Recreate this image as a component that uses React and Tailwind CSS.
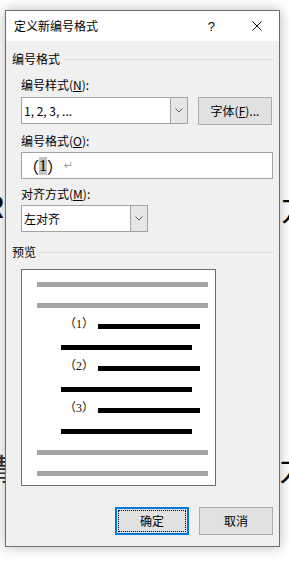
import React from 'react';

const Chevron = () => (
  <svg width="8" height="5" viewBox="0 0 8 5" fill="none">
    <path d="M0.5 0.5 L4 4 L7.5 0.5" stroke="#5f5f5f" strokeWidth="1" />
  </svg>
);

const Select = ({ width, text }) => (
  <div className={`flex h-[27px] border border-[#a3a3a3] bg-white ${width}`}>
    <div className="flex flex-1 items-center pl-[2px] text-[12px] leading-[16px] text-black">{text}</div>
    <div className="flex w-[17px] items-center justify-center border-l border-[#a3a3a3] bg-[#e6e6e6]">
      <Chevron />
    </div>
  </div>
);

const GroupHeader = ({ label, gap }) => (
  <div className="flex h-[16px] items-center">
    <span className="text-[12px] leading-[16px] text-black">{label}</span>
    <div className={`h-px flex-1 bg-[#dcdcdc] ${gap}`} />
  </div>
);

const Label = ({ text, k, className }) => (
  <div className={`h-[16px] text-[12px] leading-[16px] text-black ${className}`}>
    {text}(<span className="underline">{k}</span>):
  </div>
);

const GrayLine = () => <div className="ml-[15px] h-[5px] w-[171px] bg-[#a4a4a4]" />;
const LongLine = () => <div className="ml-[39px] h-[5px] w-[131px] bg-black" />;
const NumLine = ({ n }) => (
  <div className="flex h-[5px] items-center">
    <span className="mb-[5px] w-[76px] pl-[42px] font-['Liberation_Serif','Noto_Sans_CJK_SC',serif] text-[12px] leading-none whitespace-nowrap text-[#111]">
      （{n}）
    </span>
    <div className="h-[5px] w-[102px] bg-black" />
  </div>
);

export default function App() {
  return (
    <div className="relative h-[561px] w-[289px] overflow-hidden bg-white pl-[5px] pt-[10px] font-['Noto_Sans_CJK_SC',sans-serif]">
      {/* document text behind the dialog */}
      <span className="absolute left-[-15px] top-[190px] text-[30px] leading-none text-black">R</span>
      <span className="absolute left-[-18px] top-[452px] text-[30px] leading-none text-[#333]">请</span>
      <span className="absolute left-[281px] top-[192px] text-[30px] leading-none text-black">方</span>
      <span className="absolute left-[279px] top-[452px] text-[30px] leading-none text-black">力</span>

      <div className="relative flex h-[537px] w-[275px] flex-col border border-[#6e6e6e] bg-[#f0f0f0] shadow-[0_0_12px_rgba(0,0,0,0.28)]">
        <div className="flex h-[30px] items-center bg-white pl-[8px]">
          <span className="text-[12px] leading-[16px] text-black">定义新编号格式</span>
          <div className="flex-1" />
          <span className="font-['Liberation_Sans',sans-serif] text-[13px] leading-none text-black">?</span>
          <svg className="ml-[37px] mr-[17px]" width="10" height="10" viewBox="0 0 10 10">
            <path d="M0.5 0.5 L9.5 9.5 M9.5 0.5 L0.5 9.5" stroke="#111" strokeWidth="1" />
          </svg>
        </div>

        <div className="flex flex-1 flex-col pl-[6px] pr-[5px]">
          <div className="mt-[10px]">
            <GroupHeader label="编号格式" gap="ml-[5px]" />
          </div>
          <div className="ml-[9px] flex flex-col">
            <Label text="编号样式" k="N" className="mt-[10px]" />
            <div className="mt-[4px] flex h-[28px] gap-[10px]">
              <Select width="w-[167px]" text="1, 2, 3, ..." />
              <div className="flex h-[28px] w-[74px] items-center justify-center border border-[#adadad] bg-[#e1e1e1] text-[12px] leading-[16px] text-black">
                字体(<span className="underline">F</span>)...
              </div>
            </div>
            <Label text="编号格式" k="O" className="mt-[8px]" />
            <div className="mt-[3px] flex h-[27px] w-[252px] items-center border border-[#a3a3a3] bg-white pl-[1px] text-[16px] leading-[18px] text-black">
              <span className="w-[16px] font-['Noto_Sans_CJK_SC',sans-serif]">（</span>
              <span className="w-[8px] bg-[#c3c3c3] text-center font-['Liberation_Serif',serif]">1</span>
              <span className="w-[16px] font-['Noto_Sans_CJK_SC',sans-serif]">）</span>
              <span className="ml-[1px] font-['DejaVu_Sans',sans-serif] text-[11px] text-[#a0a0a0]">↵</span>
            </div>
            <Label text="对齐方式" k="M" className="mt-[7px]" />
            <div className="mt-[3px]">
              <Select width="w-[127px]" text="左对齐" />
            </div>
          </div>

          <div className="mt-[12px]">
            <GroupHeader label="预览" gap="ml-[4px]" />
          </div>

          <div className="ml-[9px] mt-[9px] flex h-[217px] w-[195px] flex-col gap-[16px] border border-[#707070] bg-white pt-[12px]">
            <GrayLine />
            <GrayLine />
            <NumLine n="1" />
            <LongLine />
            <NumLine n="2" />
            <LongLine />
            <NumLine n="3" />
            <LongLine />
            <GrayLine />
            <GrayLine />
          </div>

          <div className="mt-[21px] flex justify-end gap-[10px] pr-[1px]">
            <div className="h-[28px] w-[74px] border-2 border-[#0078d7] bg-[#e1e1e1] p-px">
              <div className="flex h-full items-center justify-center border border-dotted border-black text-[12px] leading-[16px] text-black">
                确定
              </div>
            </div>
            <div className="flex h-[28px] w-[74px] items-center justify-center border border-[#adadad] bg-[#e1e1e1] text-[12px] leading-[16px] text-black">
              取消
            </div>
          </div>
        </div>
      </div>
    </div>
  );
}
